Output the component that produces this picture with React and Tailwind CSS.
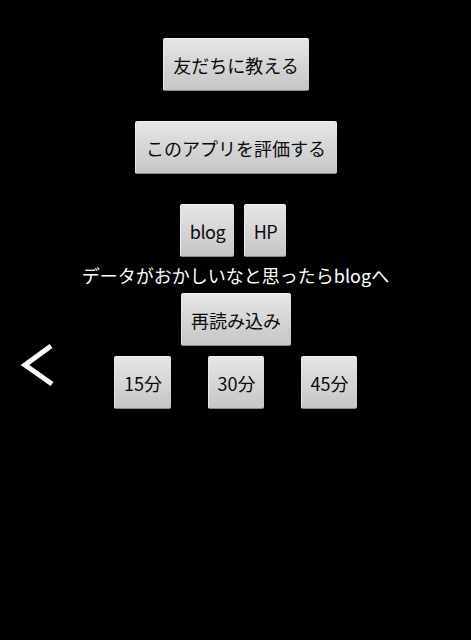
import React from "react";

const font = { fontFamily: '"Noto Sans CJK JP", "Noto Sans", sans-serif' };

function Btn({ children, className = "" }) {
  return (
    <div
      className={
        "flex h-[53px] items-center justify-center whitespace-nowrap rounded-[2px] border-t border-l border-t-[#f2f2f2] border-l-[#e8e8e8] border-b border-b-[#8a8a8a] bg-gradient-to-b from-[#e6e6e6] to-[#c6c6c6] text-[18px] leading-none text-[#0a0a0a] " +
        className
      }
    >
      {children}
    </div>
  );
}

export default function App() {
  return (
    <div className="relative h-[640px] w-[471px] overflow-hidden bg-black" style={font}>
      <div className="flex flex-col items-center pt-[38px]">
        <Btn className="w-[146px]">友だちに教える</Btn>
        <Btn className="mt-[30px] w-[202px]">このアプリを評価する</Btn>
        <div className="mt-[30px] mr-[5px] flex gap-[10px]">
          <Btn className="w-[54px] tracking-[-0.5px]">blog</Btn>
          <Btn className="w-[42px] tracking-[-0.5px]">HP</Btn>
        </div>
        <div className="flex h-[36px] items-center text-[18px] leading-none text-white">
          データがおかしいなと思ったらblogへ
        </div>
        <Btn className="w-[110px]">再読み込み</Btn>
        <div className="mt-[10px] flex gap-[37px]">
          <Btn className="w-[57px]">15分</Btn>
          <Btn className="w-[56px]">30分</Btn>
          <Btn className="w-[56px]">45分</Btn>
        </div>
      </div>
      <svg
        className="absolute left-[20px] top-[342px]"
        width="38"
        height="46"
        viewBox="0 0 38 46"
      >
        <polyline
          points="31,4 5,23 32,42"
          fill="none"
          stroke="white"
          strokeWidth="5"
          strokeLinecap="butt"
          strokeLinejoin="miter"
        />
      </svg>
    </div>
  );
}
